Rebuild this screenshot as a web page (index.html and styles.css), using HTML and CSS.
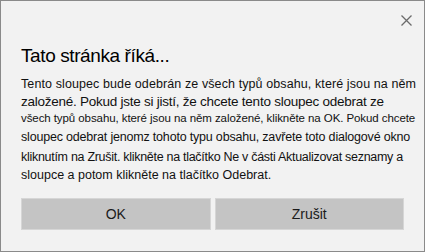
FILE: index.html
```html
<!DOCTYPE html>
<html lang="cs">
<head>
<meta charset="utf-8">
<link rel="stylesheet" href="styles.css">
</head>
<body>
<div class="dialog">
  <div class="topbar">
    <button class="close" aria-label="Zavřít">
      <svg width="11" height="11" viewBox="0 0 11 11"><path d="M0.5 0.5L10.5 10.5M10.5 0.5L0.5 10.5" stroke="#6b6b6b" stroke-width="1.3" fill="none"/></svg>
    </button>
  </div>
  <h1 class="title">Tato stránka říká...</h1>
  <div class="message">
    <div class="line l1">Tento sloupec bude odebrán ze všech typů obsahu, které jsou na něm</div>
    <div class="line l2">založené. Pokud jste si jistí, že chcete tento sloupec odebrat ze</div>
    <div class="line l3">všech typů obsahu, které jsou na něm založené, klikněte na OK. Pokud chcete</div>
    <div class="line l4">sloupec odebrat jenomz tohoto typu obsahu, zavřete toto dialogové okno</div>
    <div class="line l5">kliknutím na Zrušit. klikněte na tlačítko Ne v části Aktualizovat seznamy a</div>
    <div class="line l6">sloupce a potom klikněte na tlačítko Odebrat.</div>
  </div>
  <div class="buttons">
    <button class="btn">OK</button>
    <button class="btn">Zrušit</button>
  </div>
</div>
</body>
</html>
```
FILE: styles.css
```css
html, body {
  margin: 0;
  padding: 0;
  background: #f2f2f2;
}
.dialog {
  width: 425px;
  height: 252px;
  box-sizing: border-box;
  border: 1px solid #8a8a8a;
  background: #f2f2f2;
  display: flex;
  flex-direction: column;
  padding: 0 20px 0 20px;
  font-family: "Liberation Sans", Arial, sans-serif;
  color: #000;
}
.topbar {
  display: flex;
  justify-content: flex-end;
  height: 43px;
  margin-right: -14px;
}
.close {
  border: 0;
  background: transparent;
  padding: 0;
  width: 24px;
  height: 24px;
  margin-top: 7px;
  display: flex;
  align-items: center;
  justify-content: center;
}
.title {
  margin: 0;
  font-weight: 400;
  font-size: 19px;
  letter-spacing: -0.4px;
  line-height: 24px;
  color: #000;
}
.message {
  margin-top: 7px;
  color: #111;
}
.line {
  white-space: nowrap;
  font-size: 12.5px;
  line-height: 18px;
}
.l1 { letter-spacing: 0.1px; }
.l2 { font-size: 13.5px; letter-spacing: -0.25px; line-height: 17px; }
.l3 { font-size: 11.5px; letter-spacing: -0.08px; line-height: 17px; }
.l4 { letter-spacing: -0.19px; line-height: 21px; }
.l5 { letter-spacing: -0.29px; }
.buttons {
  display: flex;
  gap: 4px;
  margin-top: auto;
  margin-bottom: 21px;
}
.btn {
  flex: 1;
  height: 32px;
  border: 1px solid #d6d6d6;
  background: #c4c4c4;
  font-family: "Liberation Sans", Arial, sans-serif;
  font-size: 14px;
  color: #1a1a1a;
  padding: 0;
}
```
